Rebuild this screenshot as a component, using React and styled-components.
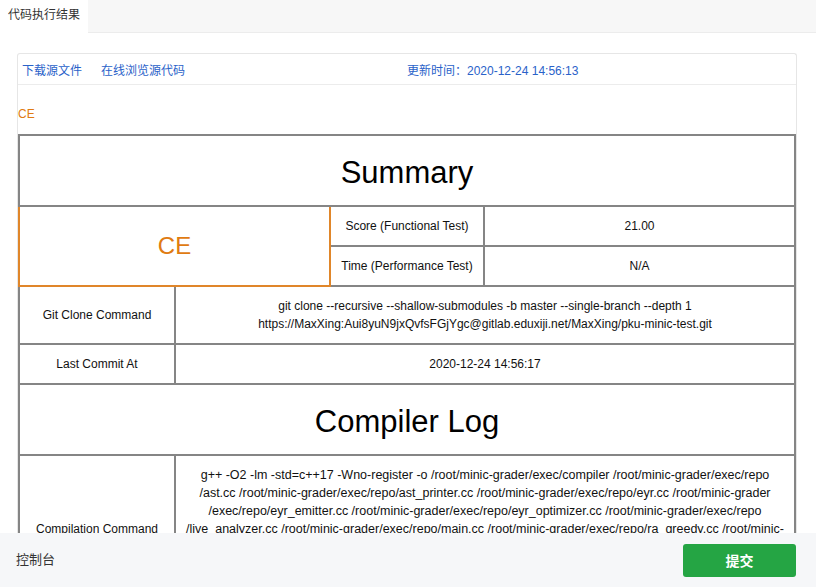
import React from 'react';
import styled, { createGlobalStyle } from 'styled-components';

const GlobalStyle = createGlobalStyle`
  html, body {
    margin: 0;
    padding: 0;
    overflow: hidden;
    background: #fff;
  }
  body {
    font-family: "Liberation Sans", "Noto Sans CJK SC", sans-serif;
    color: #222;
  }
`;

const Page = styled.div`
  width: 816px;
  height: 587px;
  overflow: hidden;
`;

const TabBar = styled.div`
  display: flex;
  height: 32px;
  background: #f7f7f7;
  border-bottom: 1px solid #ececec;
`;

const Tab = styled.div`
  width: 80px;
  height: 33px;
  padding-left: 8px;
  background: #fff;
  font-size: 12px;
  line-height: 31px;
  color: #333;
`;

const Card = styled.div`
  margin: 20px 19px 0 17px;
  border: 1px solid #e6e6e6;
  border-bottom: none;
  border-radius: 3px 3px 0 0;
`;

const CardHeader = styled.div`
  display: grid;
  grid-template-columns: 1fr 1fr;
  align-items: center;
  height: 30px;
  border-bottom: 1px solid #ececec;
  font-size: 12px;
`;

const LinkGroup = styled.div`
  display: flex;
  gap: 19px;
  padding-left: 4px;
`;

const Link = styled.a`
  color: #2a62c9;
  text-decoration: none;
  cursor: pointer;
`;

const Updated = styled.span`
  color: #2a62c9;
`;

const Status = styled.div`
  padding: 20px 0 11px;
  font-size: 12px;
  line-height: 18px;
  color: #e07b12;
`;

const Table = styled.table`
  width: 778px;
  border-collapse: collapse;
  table-layout: fixed;
  font-size: 12px;
  line-height: 18px;
  color: #111;
`;

const Cell = styled.td`
  border: 2px solid #858585;
  padding: ${(p) => (p.$wide ? '10px 0' : '10px 8px')};
  text-align: center;
  vertical-align: middle;
  white-space: ${(p) => (p.$wide ? 'nowrap' : 'normal')};
  font-size: ${(p) => (p.$wide ? '12.5px' : '12px')};
`;

const TitleCell = styled(Cell)`
  height: 49px;
  padding: 12px 8px 8px;
  font-size: 31px;
  line-height: 36px;
  color: #000;
`;

const VerdictCell = styled(Cell)`
  border-color: #e0862a;
  font-size: 24px;
  color: #e07b12;
`;

const Footer = styled.div`
  position: fixed;
  left: 0;
  bottom: 0;
  width: 816px;
  height: 54px;
  box-sizing: border-box;
  display: flex;
  align-items: center;
  justify-content: space-between;
  padding: 0 20px 0 16px;
  background: #f6f7f9;
`;

const Console = styled.span`
  font-size: 13px;
  line-height: 18px;
  color: #333;
`;

const SubmitButton = styled.button`
  width: 113px;
  height: 33px;
  padding: 0;
  border: none;
  border-radius: 3px;
  background: #25a544;
  color: #fff;
  font-family: "Noto Sans CJK SC", sans-serif;
  font-size: 14px;
  line-height: 33px;
  font-weight: 700;
  cursor: pointer;
`;

const compileLines = [
  'g++ -O2 -lm -std=c++17 -Wno-register -o /root/minic-grader/exec/compiler /root/minic-grader/exec/repo',
  '/ast.cc /root/minic-grader/exec/repo/ast_printer.cc /root/minic-grader/exec/repo/eyr.cc /root/minic-grader',
  '/exec/repo/eyr_emitter.cc /root/minic-grader/exec/repo/eyr_optimizer.cc /root/minic-grader/exec/repo',
  '/live_analyzer.cc /root/minic-grader/exec/repo/main.cc /root/minic-grader/exec/repo/ra_greedy.cc /root/minic-',
  'grader/exec/repo/ra_linear_scan.cc /root/minic-grader/exec/repo/riscv_emitter.cc /root/minic-grader/exec',
  '/repo/parser.tab.cc /root/minic-grader/exec/repo/lex.yy.cc /root/minic-grader/exec/repo/type_checker.cc',
  '/root/minic-grader/exec/repo/utils.cc',
];

const Lines = ({ lines }) =>
  lines.map((line, i) => (
    <React.Fragment key={i}>
      {line}
      {i < lines.length - 1 && <br />}
    </React.Fragment>
  ));

export default function App() {
  return (
    <Page>
      <GlobalStyle />
      <TabBar>
        <Tab>代码执行结果</Tab>
      </TabBar>

      <Card>
        <CardHeader>
          <LinkGroup>
            <Link>下载源文件</Link>
            <Link>在线浏览源代码</Link>
          </LinkGroup>
          <Updated>更新时间：2020-12-24 14:56:13</Updated>
        </CardHeader>

        <Status>CE</Status>

        <Table>
          <colgroup>
            <col style={{ width: 156 }} />
            <col style={{ width: 155 }} />
            <col style={{ width: 154 }} />
            <col />
          </colgroup>
          <tbody>
            <tr>
              <TitleCell colSpan={4}>Summary</TitleCell>
            </tr>
            <tr>
              <VerdictCell colSpan={2} rowSpan={2}>CE</VerdictCell>
              <Cell>Score (Functional Test)</Cell>
              <Cell>21.00</Cell>
            </tr>
            <tr>
              <Cell>Time (Performance Test)</Cell>
              <Cell>N/A</Cell>
            </tr>
            <tr>
              <Cell>Git Clone Command</Cell>
              <Cell colSpan={3}>
                <Lines
                  lines={[
                    'git clone --recursive --shallow-submodules -b master --single-branch --depth 1',
                    'https://MaxXing:Aui8yuN9jxQvfsFGjYgc@gitlab.eduxiji.net/MaxXing/pku-minic-test.git',
                  ]}
                />
              </Cell>
            </tr>
            <tr>
              <Cell>Last Commit At</Cell>
              <Cell colSpan={3}>2020-12-24 14:56:17</Cell>
            </tr>
            <tr>
              <TitleCell colSpan={4}>Compiler Log</TitleCell>
            </tr>
            <tr>
              <Cell>Compilation Command</Cell>
              <Cell colSpan={3} $wide>
                <Lines lines={compileLines} />
              </Cell>
            </tr>
          </tbody>
        </Table>
      </Card>

      <Footer>
        <Console>控制台</Console>
        <SubmitButton>提交</SubmitButton>
      </Footer>
    </Page>
  );
}
